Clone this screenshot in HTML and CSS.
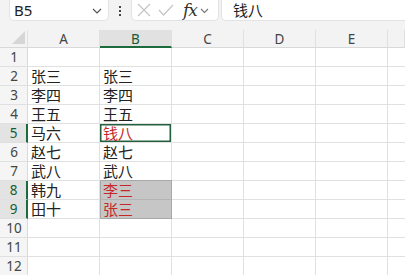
FILE: index.html
```html
<!DOCTYPE html>
<html>
<head>
<meta charset="utf-8">
<link rel="stylesheet" href="styles.css">
</head>
<body>
<div class="bar">
  <div class="namebox"><span class="ref">B5</span>
    <svg class="chev" width="10" height="6" viewBox="0 0 10 6"><path d="M1 1 L5 5 L9 1" fill="none" stroke="#555" stroke-width="1.2"/></svg>
  </div>
  <div class="dots"><i></i><i></i><i></i></div>
  <div class="fbtns">
    <svg width="14" height="14" viewBox="0 0 14 14"><path d="M1 1 L13 13 M13 1 L1 13" stroke="#c4c4c4" stroke-width="1.2" fill="none"/></svg>
    <svg width="16" height="12" viewBox="0 0 16 12"><path d="M1 6 L5.5 11 L15 1" stroke="#c4c4c4" stroke-width="1.2" fill="none"/></svg>
    <span class="fx">fx</span>
    <svg class="chev2" width="9" height="6" viewBox="0 0 9 6"><path d="M1 1 L4.5 4.5 L8 1" fill="none" stroke="#777" stroke-width="1.1"/></svg>
  </div>
  <div class="formula">钱八</div>
</div>
<div class="grid">
  <div class="corner"><svg width="13" height="13" viewBox="0 0 13 13"><path d="M13 0 L13 13 L0 13 Z" fill="#d6d6d6"/></svg></div>
  <div class="ch">A</div><div class="ch sel">B</div><div class="ch">C</div><div class="ch">D</div><div class="ch">E</div><div class="ch last"></div>

  <div class="rh">1</div><div class="c"></div><div class="c"></div><div class="c"></div><div class="c"></div><div class="c"></div><div class="c last"></div>
  <div class="rh">2</div><div class="c">张三</div><div class="c">张三</div><div class="c"></div><div class="c"></div><div class="c"></div><div class="c last"></div>
  <div class="rh">3</div><div class="c">李四</div><div class="c">李四</div><div class="c"></div><div class="c"></div><div class="c"></div><div class="c last"></div>
  <div class="rh">4</div><div class="c">王五</div><div class="c">王五</div><div class="c"></div><div class="c"></div><div class="c"></div><div class="c last"></div>
  <div class="rh sel">5</div><div class="c">马六</div><div class="c red active">钱八</div><div class="c"></div><div class="c"></div><div class="c"></div><div class="c last"></div>
  <div class="rh">6</div><div class="c">赵七</div><div class="c">赵七</div><div class="c"></div><div class="c"></div><div class="c"></div><div class="c last"></div>
  <div class="rh">7</div><div class="c">武八</div><div class="c">武八</div><div class="c"></div><div class="c"></div><div class="c"></div><div class="c last"></div>
  <div class="rh sel">8</div><div class="c">韩九</div><div class="c red range top">李三</div><div class="c"></div><div class="c"></div><div class="c"></div><div class="c last"></div>
  <div class="rh sel">9</div><div class="c">田十</div><div class="c red range bottom">张三</div><div class="c"></div><div class="c"></div><div class="c"></div><div class="c last"></div>
  <div class="rh">10</div><div class="c"></div><div class="c"></div><div class="c"></div><div class="c"></div><div class="c"></div><div class="c last"></div>
  <div class="rh">11</div><div class="c"></div><div class="c"></div><div class="c"></div><div class="c"></div><div class="c"></div><div class="c last"></div>
  <div class="rh">12</div><div class="c"></div><div class="c"></div><div class="c"></div><div class="c"></div><div class="c"></div><div class="c last"></div>
</div>
</body>
</html>
```

FILE: styles.css
```css
html, body {
  margin: 0;
  padding: 0;
  background: #f3f3f3;
  overflow: hidden;
  width: 405px;
  height: 275px;
}
body {
  font-family: "Noto Sans", "Noto Sans CJK SC", sans-serif;
  color: #222;
}
.bar {
  display: flex;
  align-items: flex-start;
  height: 30px;
  padding-left: 9px;
  box-sizing: border-box;
}
.namebox {
  width: 100px;
  height: 22px;
  margin-top: -1px;
  background: #fff;
  border: 1px solid #e3e3e3;
  border-radius: 0 0 5px 5px;
  box-sizing: border-box;
  display: flex;
  align-items: center;
  justify-content: space-between;
  padding: 0 6px 0 4px;
}
.ref {
  font-size: 15px;
  color: #222;
}
.chev { margin-top: 1px; }
.dots {
  width: 22px;
  height: 21px;
  display: flex;
  flex-direction: column;
  align-items: center;
  justify-content: center;
  gap: 2px;
}
.dots i {
  display: block;
  width: 2px;
  height: 2px;
  background: #444;
}
.fbtns {
  width: 88px;
  height: 22px;
  margin-top: -1px;
  background: #fff;
  border: 1px solid #e3e3e3;
  border-radius: 0 0 5px 5px;
  box-sizing: border-box;
  display: flex;
  align-items: center;
  padding-left: 5px;
  gap: 7px;
}
.fx {
  font-family: "DejaVu Serif", "Liberation Serif", serif;
  font-style: italic;
  font-size: 17px;
  line-height: 20px;
  color: #333;
  margin-left: 2px;
  letter-spacing: -1px;
}
.chev2 { margin-left: -4px; margin-top: 1px; }
.formula {
  flex: 1;
  height: 22px;
  margin-top: -1px;
  margin-left: 2px;
  background: #fff;
  border: 1px solid #e3e3e3;
  border-right: none;
  border-radius: 0 0 0 5px;
  box-sizing: border-box;
  font-family: "Noto Sans CJK SC", sans-serif;
  font-size: 15px;
  line-height: 19px;
  padding-left: 11px;
}
.grid {
  display: grid;
  grid-template-columns: 28px 72px 72px 72px 72px 72px 1fr;
  grid-template-rows: 18px repeat(12, 19px);
  background: #fff;
}
.corner {
  background: #f3f3f3;
  border-bottom: 1px solid #d8d8d8;
  border-right: 1px solid #e2e2e2;
  box-sizing: border-box;
  display: flex;
  align-items: flex-end;
  justify-content: flex-end;
  padding: 0 2px 3px 0;
}
.ch {
  background: #f3f3f3;
  border-bottom: 1px solid #d8d8d8;
  border-right: 1px solid #e0e0e0;
  box-sizing: border-box;
  font-size: 13.5px;
  color: #444;
  text-align: center;
  line-height: 18px;
}
.ch.sel {
  background: #e1e1e1;
  color: #145c33;
  border-bottom: 2px solid #1c6b3c;
}
.rh {
  background: #f5f5f5;
  border-bottom: 1px solid #e0e0e0;
  border-right: 1px solid #dadada;
  box-sizing: border-box;
  font-size: 13.5px;
  color: #444;
  text-align: center;
  line-height: 19px;
  padding-left: 1px;
}
.rh.sel {
  background: #e3e3e3;
  color: #145c33;
  border-right: 2px solid #1c6b3c;
}
.c {
  border-bottom: 1px solid #e0e0e0;
  border-right: 1px solid #e0e0e0;
  box-sizing: border-box;
  font-family: "Noto Sans CJK SC", sans-serif;
  font-size: 15px;
  line-height: 18px;
  padding-left: 3px;
  white-space: nowrap;
  color: #222;
}
.c.last { border-right: none; }
.red { color: #c62828; }
.active {
  box-shadow: inset 0 0 0 1.5px #24603f;
}
.range {
  background: #c6c6c6;
  border-right: 1px solid #a8a8a8;
  border-left: 1px solid #a8a8a8;
  padding-left: 2px;
  color: #c62828;
}
.range.top {
  border-top: 1px solid #a8a8a8;
  margin-top: -1px;
  border-bottom: 1px solid #b4b4b4;
}
.range.bottom {
  border-bottom: 1px solid #a8a8a8;
}
```
